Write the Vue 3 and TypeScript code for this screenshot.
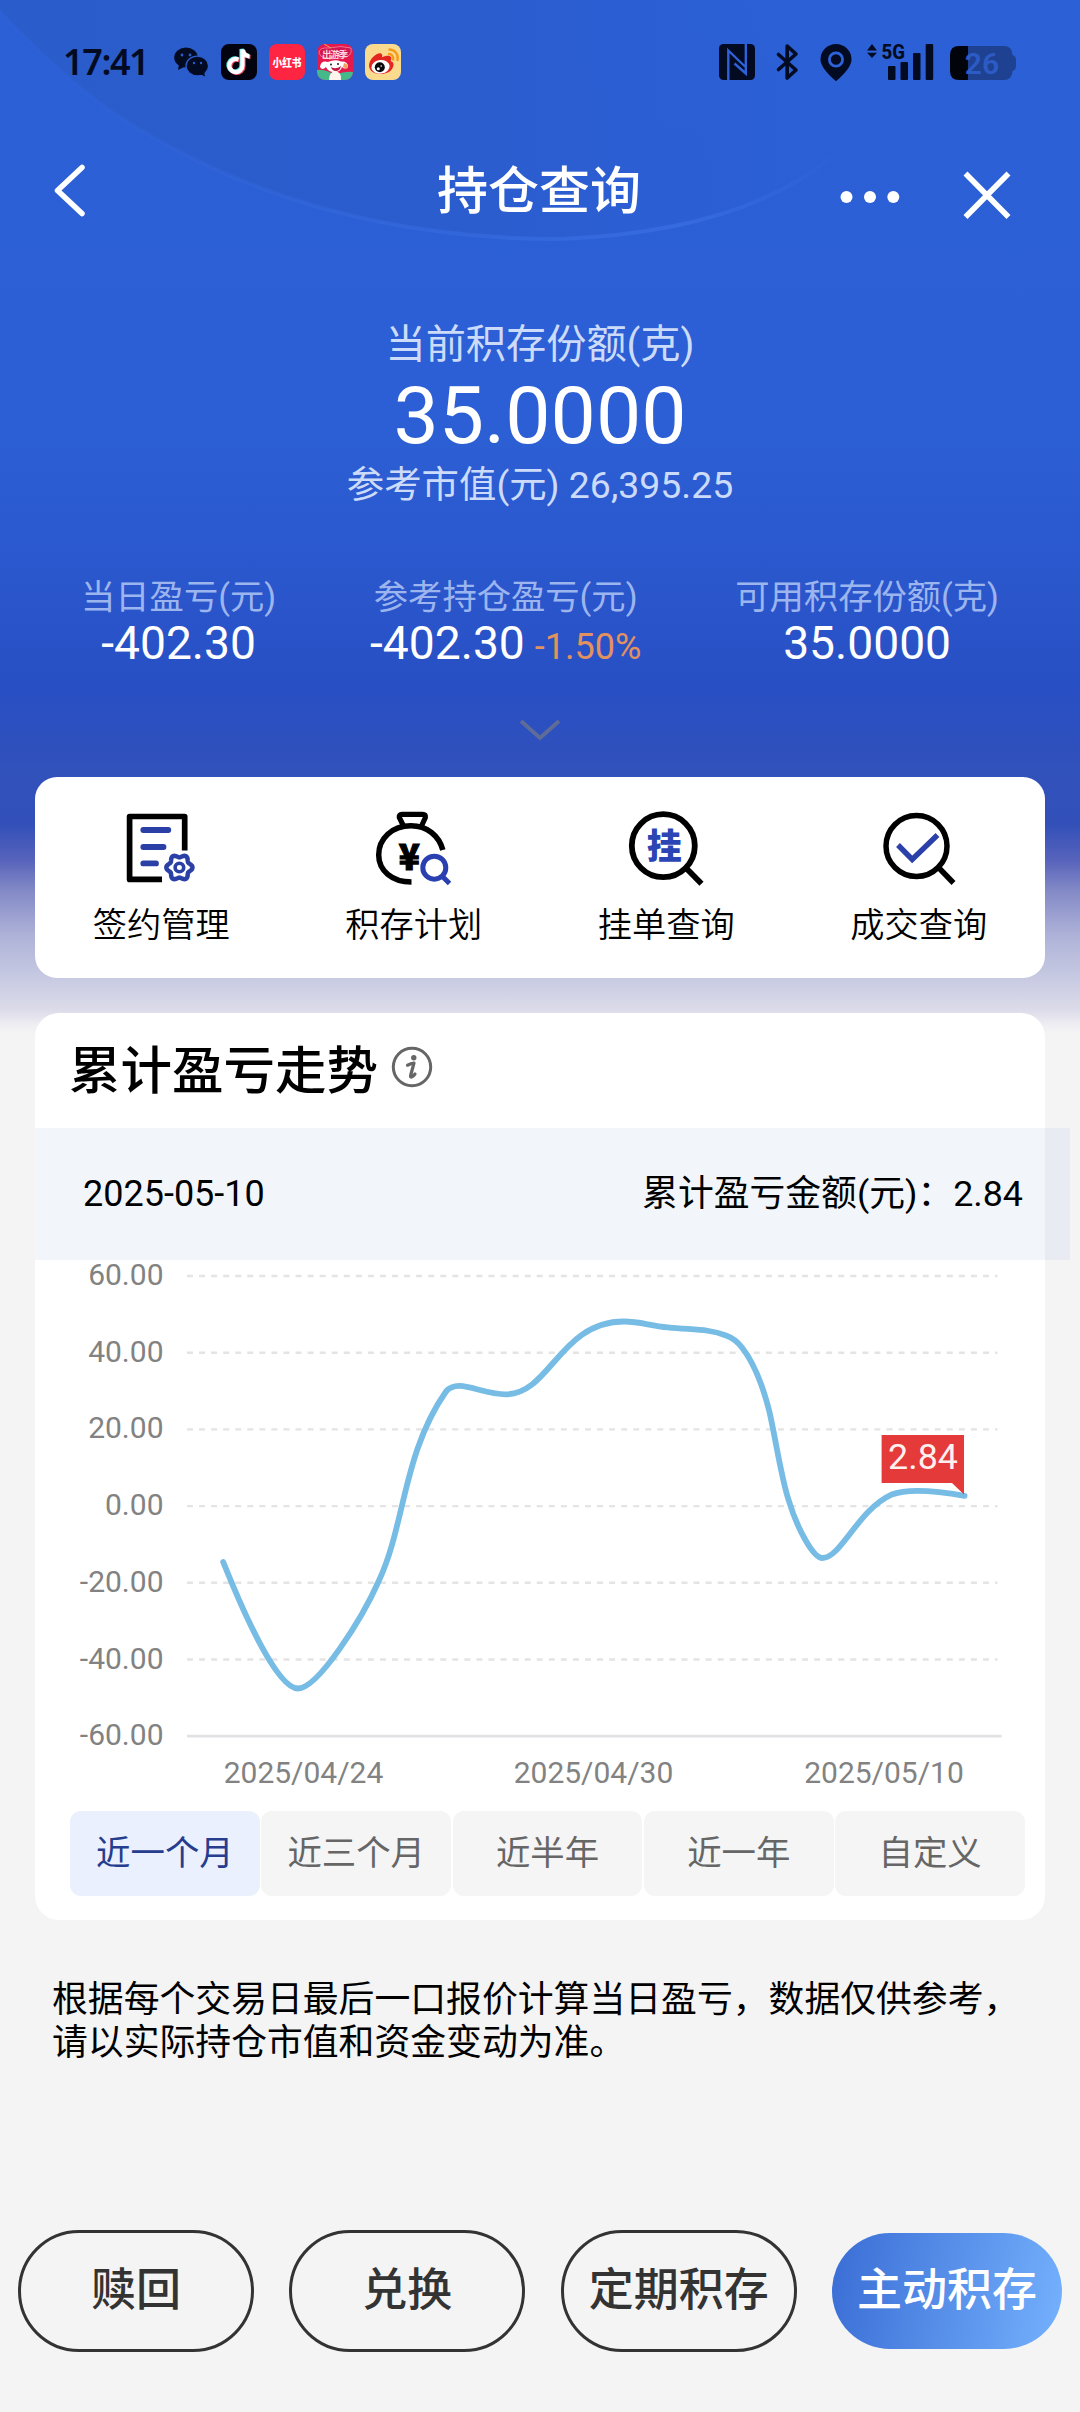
<script setup lang="ts">
interface Stat { label: string; value: string; rate?: string }

const stats: Stat[] = [
  { label: '当日盈亏(元)', value: '-402.30' },
  { label: '参考持仓盈亏(元)', value: '-402.30', rate: '-1.50%' },
  { label: '可用积存份额(克)', value: '35.0000' },
]

const ranges: string[] = ['近一个月', '近三个月', '近半年', '近一年', '自定义']
const activeRange = '近一个月'

const yTicks: string[] = ['60.00', '40.00', '20.00', '0.00', '-20.00', '-40.00', '-60.00']
const xTicks: { x: number; text: string }[] = [
  { x: 303.5, text: '2025/04/24' },
  { x: 593.5, text: '2025/04/30' },
  { x: 884, text: '2025/05/10' },
]
const chartTop = 16
const tickStep = 76.7

// Profit curve in chart coordinates
const curvePath = [
  'M223.2 302',
  'C246 359 278 428.5 298 428.5',
  'S362 359 379 320.5',
  'C405 265 403 193 446 131.5',
  'C458 117.5 480 134.3 506 134.3',
  'C550 134.3 560 61.5 624 61.5',
  'C641 61.5 650 66 668 67.3',
  'C692 70 708 68.5 726 75.5',
  'C733 78 737 81 742 87.5',
  'C754 103 762 123 769 150',
  'C775 175 781 217 788.6 240',
  'C797 268 813 298 822.4 298',
  'C841 298 858 250 891 234.8',
  'C908 228 935 230.5 964.6 235.9',
].join('')

function gear(cx: number, cy: number): string {
  const pts: string[] = []
  for (let i = 0; i < 72; i++) {
    const t = (i / 72) * Math.PI * 2
    const r = 11.6 + 1.5 * Math.cos(6 * t)
    pts.push(`${(cx + r * Math.cos(t)).toFixed(2)} ${(cy + r * Math.sin(t)).toFixed(2)}`)
  }
  return `M${pts.join('L')}Z`
}

const gearPath = gear(179.4, 867.5)
</script>

<template>
  <div class="page">
    <svg class="arc" width="1080" height="700" viewBox="0 0 1080 700">
      <defs>
        <linearGradient id="disc" gradientUnits="userSpaceOnUse" x1="0" y1="0" x2="900" y2="0">
          <stop offset="0" stop-color="#2b5ccb" />
          <stop offset=".55" stop-color="#2b5dcf" />
          <stop offset="1" stop-color="#2b5fd5" stop-opacity="0" />
        </linearGradient>
        <linearGradient id="rim" gradientUnits="userSpaceOnUse" x1="0" y1="0" x2="850" y2="0">
          <stop offset="0" stop-color="#3a6fe2" stop-opacity="0" />
          <stop offset=".8" stop-color="#3c70e4" stop-opacity=".65" />
          <stop offset="1" stop-color="#3a6fe2" stop-opacity="0" />
        </linearGradient>
      </defs>
      <path d="M0 0V10Q60 74 110 110Q300 239 560 239Q740 232 830 158Q900 100 960 0Z" fill="url(#disc)" />
      <path d="M0 10Q60 74 110 110Q300 239 560 239Q740 232 830 158" fill="none" stroke="url(#rim)" stroke-width="4" />
    </svg>

    <header class="status">
      <span class="time">17:41</span>
      <div class="apps">
        <svg width="36" height="36" viewBox="172 44 36 36">
          <ellipse cx="185" cy="57.5" rx="11.8" ry="10" fill="#030b23" />
          <path d="M178 64l-1 6 6-3z" fill="#030b23" />
          <ellipse cx="196.300" cy="66" rx="11.300" ry="9.800" fill="#030b23" stroke="#2b5ccb" stroke-width="1.300" />
          <path d="M199 74l5 2.500-1-5z" fill="#030b23" />
          <g fill="#2b5ccb"><circle cx="181" cy="55" r="1.400" /><circle cx="189" cy="55" r="1.400" /><circle cx="193" cy="63" r="1.200" /><circle cx="200" cy="63" r="1.200" /></g>
        </svg>
        <svg width="36" height="36" viewBox="0 0 36 36">
          <rect width="36" height="36" rx="8" fill="#02030e" />
          <g fill="none" stroke-width="4.200">
            <path d="M17.500 15.500a6.600 6.600 0 1 0 4 6V5.500c.6 4 3.400 6.500 7 6.800" stroke="#4fe3e6" transform="translate(-1 -.6)" />
            <path d="M17.500 15.500a6.600 6.600 0 1 0 4 6V5.500c.6 4 3.400 6.500 7 6.800" stroke="#ee4c68" transform="translate(1 .8)" />
            <path d="M17.500 15.500a6.600 6.600 0 1 0 4 6V5.500c.6 4 3.400 6.500 7 6.800" stroke="#fff" />
          </g>
        </svg>
        <svg width="36" height="36" viewBox="0 0 36 36">
          <rect width="36" height="36" rx="8" fill="#fe2543" />
          <text x="18" y="22.600" text-anchor="middle" class="cjk" font-size="11" font-weight="900" fill="#fff" textLength="29" lengthAdjust="spacingAndGlyphs">小红书</text>
        </svg>
        <svg width="36" height="36" viewBox="0 0 36 36">
          <defs><clipPath id="jd"><rect width="36" height="36" rx="8" /></clipPath></defs>
          <g clip-path="url(#jd)">
            <rect width="36" height="36" fill="#e5194b" />
            <path d="M0 26Q8 25 18 31Q28 27 36 28V36H0Z" fill="#46b98b" />
            <path d="M2 9Q2 3 12 4Q24 1 34 4Q36 13 24 14Q4 17 2 9Z" fill="#d31650" stroke="#f58aa3" stroke-width=".8" />
            <path d="M7 0L14 4" stroke="#f6a05c" stroke-width="1" />
            <text x="18" y="14" text-anchor="middle" class="cjk" font-size="9.500" font-weight="700" fill="#ffd9df" textLength="26">出游季</text>
            <path d="M3 23Q4 16 11 18Q18 15 24 17.500Q31 17 31 23Q28 26 25 23Q24 28 17 28Q11 28 9 23Q5 27 3 23Z" fill="#fff" />
            <path d="M12 36Q12 28 18 27Q25 28 24 36Z" fill="#fff4ee" />
            <path d="M14 23Q19 26 24 22Q23 27 19 27Q15 27 14 23Z" fill="#c3163d" />
            <path d="M27 19Q32 20 30 25L26 23Z" fill="#f6a05c" />
            <circle cx="14" cy="20.500" r="1" fill="#222" /><circle cx="21" cy="20" r="1" fill="#222" />
          </g>
        </svg>
        <svg width="36" height="36" viewBox="0 0 36 36">
          <rect width="36" height="36" rx="8" fill="#fadb8e" />
          <path d="M4 22C4 14 13 8 16 9.500C18 10.500 17 13 17 13S24 10 26 13C27 15 25.500 17 25.500 17C29 18 29 21 28 23C25.500 32 5 33 4 22Z" fill="#e3261f" />
          <ellipse cx="15.500" cy="22.800" rx="9.200" ry="6.800" fill="#fff" transform="rotate(-8 15.500 22.800)" />
          <circle cx="14.800" cy="23.200" r="5" fill="#0b0b0b" />
          <circle cx="13.300" cy="24.700" r="1.500" fill="#fff" /><circle cx="16.200" cy="22" r=".8" fill="#fff" />
          <path d="M24.500 5.500a8.500 8.500 0 0 1 8 10.500M24 10a4.500 4.500 0 0 1 4.200 5.500" fill="none" stroke="#f59c1c" stroke-width="2.400" stroke-linecap="round" />
        </svg>
      </div>
      <svg class="signals" width="300" height="60" viewBox="718 32 300 60">
        <rect x="719" y="44" width="36" height="36" rx="4.500" fill="#030b23" />
        <path d="M728.300 80V50.500L745 66.500M745.800 44V73.500L734.500 63.500" fill="none" stroke="#2d62d8" stroke-width="2.400" />
        <path d="M778.500 54.500L796 70L787.200 78V46L796 54L778.500 69.500" fill="none" stroke="#030b23" stroke-width="3.600" stroke-linejoin="round" stroke-linecap="round" />
        <path d="M836 81.200Q820.500 68 820.500 59.500A15.500 15.500 0 0 1 851.500 59.500Q851.500 68 836 81.200Z" fill="#030b23" />
        <circle cx="836" cy="59.500" r="6.600" fill="none" stroke="#2d62d8" stroke-width="2.800" />
        <path d="M867 50.500L872 44L877 50.500ZM867 52.800H877L872 58Z" fill="#030b23" />
        <text x="881.500" y="58.800" class="sans" font-size="21" font-weight="800" fill="#030b23" textLength="23.500" lengthAdjust="spacingAndGlyphs">5G</text>
        <g fill="#030b23">
          <rect x="888" y="66" width="7.500" height="14" rx="1" /><rect x="900.500" y="62" width="7.500" height="18" rx="1" />
          <rect x="913" y="53" width="7.500" height="27" rx="1" /><rect x="925.700" y="44" width="7.500" height="36" rx="1" />
        </g>
        <path d="M968 46H1004Q1012 46 1012.500 55Q1016 56 1016 60V66Q1016 70 1012.500 71Q1012 80 1004 80H968Z" fill="#1e4291" />
        <path d="M968 46H959Q950 46 950 55V71Q950 80 959 80H968Z" fill="#02040c" />
        <text x="982" y="74" text-anchor="middle" class="sans" font-size="30" font-weight="600" fill="#2d5bc6">26</text>
      </svg>
    </header>

    <nav class="titlebar">
      <svg width="32" height="56" viewBox="54 162 32 56"><path d="M82 167.500L57.500 190.500L82 213.500" fill="none" stroke="#fff" stroke-width="5.500" stroke-linecap="round" stroke-linejoin="round" /></svg>
      <h1>持仓查询</h1>
      <svg class="tools" width="176" height="60" viewBox="838 165 176 60">
        <g fill="#fff"><circle cx="846.500" cy="197" r="6" /><circle cx="870" cy="197" r="6" /><circle cx="893.300" cy="197" r="6" /></g>
        <path d="M965.500 173.500L1008.500 217M1008.500 173.500L965.500 217" stroke="#fff" stroke-width="5.600" />
      </svg>
    </nav>

    <section class="hero">
      <p class="caption">当前积存份额(克)</p>
      <p class="total">35.0000</p>
      <p class="market">参考市值(元) 26,395.25</p>
    </section>

    <section class="stats">
      <div v-for="s in stats" :key="s.label" class="stat">
        <span class="stat-label">{{ s.label }}</span>
        <span class="stat-value">{{ s.value }}<em v-if="s.rate">{{ s.rate }}</em></span>
      </div>
    </section>

    <div class="expand">
      <svg width="44" height="26" viewBox="518 719 44 26"><path d="M521 723L540 740L559 723" fill="none" stroke="#5e6c97" stroke-width="3.800" /></svg>
    </div>

    <section class="actions">
      <div class="action">
        <svg width="80" height="80" viewBox="121 808 80 80" fill="none">
          <path d="M184.700 850.500V816.500H129.600V879.400H162" stroke="#000" stroke-width="5.700" stroke-linejoin="round" />
          <path d="M143.300 830H168.300M143.300 847H163.500M143.300 863.400H156" stroke="#2b40a6" stroke-width="5.800" stroke-linecap="round" />
          <path :d="gearPath" stroke="#2b40a6" stroke-width="4.500" stroke-linejoin="round" />
          <circle cx="179.400" cy="867.500" r="4.300" stroke="#2b40a6" stroke-width="3.600" />
        </svg>
        <span>签约管理</span>
      </div>
      <div class="action">
        <svg width="80" height="80" viewBox="373 808 80 80" fill="none">
          <path d="M402.500 826L398.300 817.500Q397.800 814.300 401 814.300H421.500Q425 814.300 424.400 817.500L420.500 826" stroke="#000" stroke-width="5.200" />
          <path d="M441.800 850C438 835.500 426 825.800 410 825.800C391 825.800 377.700 838.500 377.700 855C377.700 870.500 391 882 410.500 882" stroke="#000" stroke-width="5.500" />
          <text x="408.200" y="869.800" text-anchor="middle" class="cjk" font-size="36" font-weight="900" fill="#000" stroke="#000" stroke-width="1.200" textLength="21" lengthAdjust="spacingAndGlyphs">¥</text>
          <circle cx="433.300" cy="867.700" r="11.500" stroke="#2b40b0" stroke-width="5" />
          <path d="M441.500 876.500L448.500 883.500" stroke="#2b40b0" stroke-width="5" />
        </svg>
        <span>积存计划</span>
      </div>
      <div class="action">
        <svg width="80" height="80" viewBox="626 808 80 80" fill="none">
          <circle cx="663.300" cy="845.700" r="31.500" stroke="#000" stroke-width="5.800" />
          <path d="M686 868L701.500 883.800" stroke="#000" stroke-width="5.800" />
          <text x="664.300" y="858.500" text-anchor="middle" class="cjk" font-size="35" font-weight="900" fill="#2b46b4">挂</text>
        </svg>
        <span>挂单查询</span>
      </div>
      <div class="action">
        <svg width="80" height="80" viewBox="878.500 808 80 80" fill="none">
          <circle cx="916" cy="846" r="30.500" stroke="#000" stroke-width="5.500" />
          <path d="M938 867.500L953 883" stroke="#000" stroke-width="5.500" />
          <path d="M897.500 845L911.700 859.500L937 835" stroke="#2b40a8" stroke-width="5.400" />
        </svg>
        <span>成交查询</span>
      </div>
    </section>

    <section class="trend">
      <div class="trend-head">
        <h2>累计盈亏走势</h2>
        <svg width="42" height="42" viewBox="0 0 42 42">
          <circle cx="21" cy="21" r="18.700" fill="none" stroke="#666" stroke-width="3" />
          <circle cx="22.800" cy="11.700" r="2.700" fill="#666" />
          <path d="M16.500 19.200Q20 17.500 23 17L19.600 29.500Q19.200 31.600 21 30.800Q22.600 30 24 28" fill="none" stroke="#666" stroke-width="3.200" stroke-linejoin="round" stroke-linecap="round" />
        </svg>
      </div>
      <div class="band">
        <span>2025-05-10</span>
        <span class="amount">累计盈亏金额(元)：2.84</span>
      </div>
      <svg class="chart" width="1010" height="571" viewBox="35 -20 1010 571">
        <g v-for="(t, i) in yTicks" :key="t">
          <text x="163.500" :y="chartTop + i * tickStep + 9" text-anchor="end" class="tick">{{ t }}</text>
          <line v-if="i < 6" x1="187" x2="997.500" :y1="chartTop + i * tickStep" :y2="chartTop + i * tickStep" stroke="#e4e4e4" stroke-width="2.400" stroke-dasharray="6 6.060" />
          <line v-else x1="187" x2="1001.500" :y1="chartTop + i * tickStep" :y2="chartTop + i * tickStep" stroke="#e2e2e5" stroke-width="2.800" />
        </g>
        <text v-for="t in xTicks" :key="t.text" :x="t.x" y="523" text-anchor="middle" class="tick">{{ t.text }}</text>
        <path :d="curvePath" fill="none" stroke="#77bce4" stroke-width="5.800" stroke-linecap="round" stroke-linejoin="round" />
        <path d="M881.600 175H964V234.500L952 223H881.600Z" fill="#e43a39" />
        <text x="923" y="209" text-anchor="middle" class="badge">2.84</text>
      </svg>
      <div class="ranges">
        <span v-for="r in ranges" :key="r" class="range" :class="{ active: r === activeRange }">{{ r }}</span>
      </div>
    </section>

    <p class="note">根据每个交易日最后一口报价计算当日盈亏，数据仅供参考，请以实际持仓市值和资金变动为准。</p>

    <footer class="buttons">
      <button>赎回</button>
      <button>兑换</button>
      <button>定期积存</button>
      <button class="primary">主动积存</button>
    </footer>
  </div>
</template>

<style>
body {
  margin: 0;
  background: #f4f4f4;
}
</style>

<style scoped>
.page {
  position: relative;
  box-sizing: border-box;
  width: 1080px;
  height: 2412px;
  overflow: hidden;
  display: flex;
  flex-direction: column;
  font-family: Roboto, "Noto Sans CJK SC", sans-serif;
  color: #000;
  background: linear-gradient(180deg, #2c60d6 0, #2c5fd5 420px, #2b58ce 560px, #284fc4 690px, #3151bb 770px, #3350b9 825px, #5763bb 860px, #8289c6 890px, #aeb2d8 935px, #c8cbe2 980px, #dcdbe9 1010px, #eeedf2 1024px, #f4f4f4 1034px, #f4f4f4 100%);
}
.arc {
  position: absolute;
  inset: 0 auto auto 0;
}
.page > :not(.arc) {
  position: relative;
}
p, h1, h2 {
  margin: 0;
}
.cjk {
  font-family: "Noto Sans CJK SC", sans-serif;
}
.sans {
  font-family: Roboto, sans-serif;
}
.status {
  flex: none;
  height: 124px;
  padding: 0 62px 0 63px;
  display: flex;
  align-items: center;
}
.time {
  width: 110px;
  font: 600 36px/44px "Noto Sans", sans-serif;
  letter-spacing: -1.400px;
  color: #030b23;
}
.apps {
  display: flex;
  gap: 12px;
}
.signals {
  margin-left: auto;
}
.titlebar {
  flex: none;
  height: 132px;
  padding: 0 66px 0 54px;
  display: grid;
  grid-template-columns: 176px 1fr 176px;
  align-items: center;
}
h1 {
  padding: 4px 0 0 10px;
  font-size: 51px;
  line-height: 60px;
  font-weight: 500;
  color: #fff;
  text-align: center;
}
.tools {
  margin-top: 9px;
}
.hero {
  flex: none;
  margin-top: 65px;
  display: flex;
  flex-direction: column;
  align-items: center;
  color: #ccdbfa;
}
.caption {
  font-size: 40.200px;
  line-height: 48px;
}
.total {
  margin-top: 5px;
  font-size: 80.600px;
  line-height: 84px;
  color: #fff;
}
.market {
  margin-top: 5px;
  font-size: 37.400px;
  line-height: 44px;
}
.stats {
  flex: none;
  margin-top: 69px;
  padding: 0 81px;
  display: flex;
  justify-content: space-between;
}
.stat {
  display: flex;
  flex-direction: column;
  align-items: center;
}
.stat-label {
  font-size: 34.300px;
  line-height: 42px;
  color: #9db5ee;
}
.stat-value {
  font-size: 46.200px;
  line-height: 50px;
  color: #fff;
}
.stat-value em {
  margin-left: 10px;
  font-size: 36px;
  font-style: normal;
  color: #e29160;
}
.expand {
  flex: none;
  height: 105px;
  box-sizing: border-box;
  padding-top: 45px;
  display: flex;
  justify-content: center;
}
.actions {
  flex: none;
  height: 201px;
  margin: 0 35px;
  display: flex;
  background: #fff;
  border-radius: 22px;
}
.action {
  flex: 1;
  padding-top: 31px;
  display: flex;
  flex-direction: column;
  align-items: center;
}
.action span {
  margin-top: 17px;
  font-size: 34.200px;
  line-height: 40px;
  font-weight: 350;
}
.trend {
  flex: none;
  height: 907px;
  margin: 35px 35px 0;
  background: #fff;
  border-radius: 24px;
}
.trend-head {
  height: 115px;
  box-sizing: border-box;
  padding: 2px 0 0 34px;
  display: flex;
  align-items: center;
  gap: 13px;
}
.trend-head h2 {
  font-size: 51.500px;
  line-height: 60px;
  font-weight: 500;
}
.trend-head svg {
  margin-bottom: 9px;
}
.band {
  width: 1035px;
  height: 132px;
  box-sizing: border-box;
  padding: 0 47px 0 48px;
  display: flex;
  align-items: center;
  justify-content: space-between;
  font-size: 36px;
  line-height: 42px;
  background: linear-gradient(90deg, #f2f6fb 1010px, #e8ebf1 1010px);
}
.amount {
  font-size: 35.800px;
}
.chart {
  display: block;
  margin-top: -20px;
}
.tick {
  font-size: 30px;
  fill: #828282;
}
.badge {
  font-size: 35.800px;
  fill: #fff0f0;
}
.ranges {
  padding: 0 20px 0 35px;
  display: flex;
  gap: 1.500px;
}
.range {
  flex: 1;
  height: 85px;
  border-radius: 11px;
  background: #f5f5f5;
  color: #666;
  font-size: 34.400px;
  line-height: 84px;
  text-align: center;
}
.range.active {
  background: #eaf0fd;
  color: #263c8d;
}
.note {
  flex: none;
  width: 972px;
  margin: 59px 0 0 52px;
  font-size: 35.850px;
  line-height: 42.500px;
}
.buttons {
  margin-top: 166px;
  padding: 0 18px;
  display: flex;
  align-items: center;
  gap: 35.500px;
}
button {
  width: 236px;
  height: 122px;
  box-sizing: border-box;
  padding: 0 0 9px;
  border: 3px solid #333;
  border-radius: 61px;
  background: transparent;
  color: #333;
  font-family: inherit;
  font-size: 45px;
  font-weight: 500;
}
button.primary {
  width: 230px;
  height: 116px;
  border: 0;
  background: linear-gradient(100deg, #3a6dd5, #74b1fd);
  color: #fff;
}
</style>
